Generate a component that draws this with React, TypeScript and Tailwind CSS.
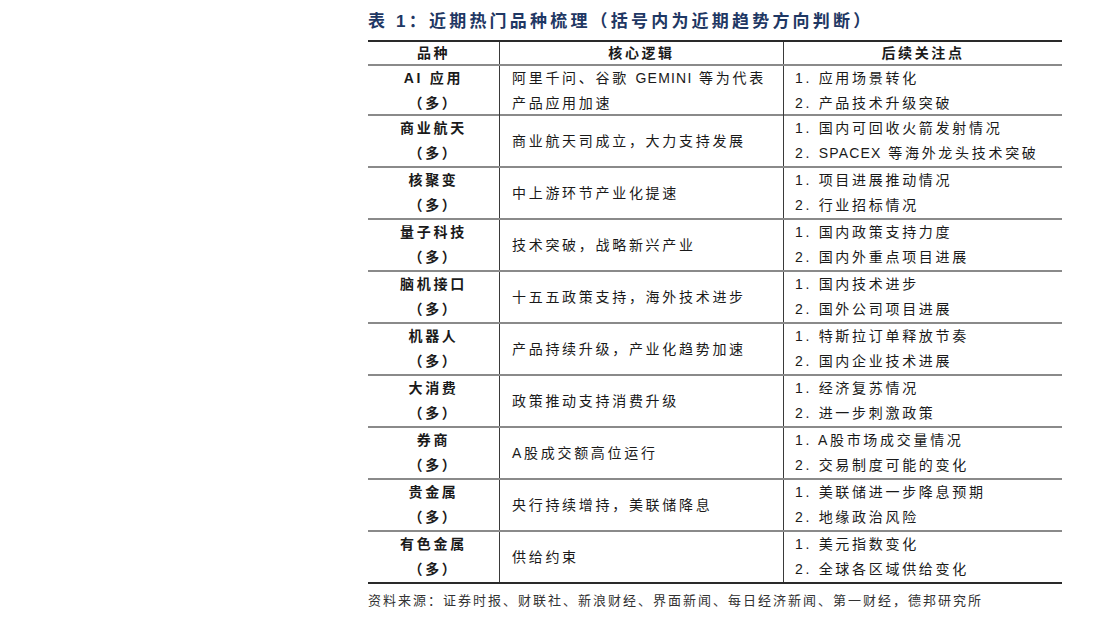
import React from "react";

type Row = { name: string; logic: string[]; focus: string[] };

const rows: Row[] = [
  { name: "AI 应用", logic: ["阿里千问、谷歌 GEMINI 等为代表", "产品应用加速"], focus: ["1. 应用场景转化", "2. 产品技术升级突破"] },
  { name: "商业航天", logic: ["商业航天司成立，大力支持发展"], focus: ["1. 国内可回收火箭发射情况", "2. SPACEX 等海外龙头技术突破"] },
  { name: "核聚变", logic: ["中上游环节产业化提速"], focus: ["1. 项目进展推动情况", "2. 行业招标情况"] },
  { name: "量子科技", logic: ["技术突破，战略新兴产业"], focus: ["1. 国内政策支持力度", "2. 国内外重点项目进展"] },
  { name: "脑机接口", logic: ["十五五政策支持，海外技术进步"], focus: ["1. 国内技术进步", "2. 国外公司项目进展"] },
  { name: "机器人", logic: ["产品持续升级，产业化趋势加速"], focus: ["1. 特斯拉订单释放节奏", "2. 国内企业技术进展"] },
  { name: "大消费", logic: ["政策推动支持消费升级"], focus: ["1. 经济复苏情况", "2. 进一步刺激政策"] },
  { name: "券商", logic: ["A股成交额高位运行"], focus: ["1. A股市场成交量情况", "2. 交易制度可能的变化"] },
  { name: "贵金属", logic: ["央行持续增持，美联储降息"], focus: ["1. 美联储进一步降息预期", "2. 地缘政治风险"] },
  { name: "有色金属", logic: ["供给约束"], focus: ["1. 美元指数变化", "2. 全球各区域供给变化"] },
];

function Txt({ t }: { t: string }) {
  const parts = t.split(/([A-Z]{3,})/);
  return (
    <>
      {parts.map((p, i) =>
        /^[A-Z]{3,}$/.test(p) ? (
          <span key={i} className="tracking-[1.2px]">{p}</span>
        ) : (
          <span key={i}>{p}</span>
        )
      )}
    </>
  );
}

export default function App() {
  return (
    <div className="w-[1110px] h-[624px] bg-white pl-[368px] pt-[10px] font-['Liberation_Sans','Noto_Sans_CJK_SC',sans-serif] text-[#1a1a1a]">
      <div className="h-[24px] leading-[24px] text-[17px] font-bold tracking-[3.2px] text-[#1f3864]">
        表 1：近期热门品种梳理（括号内为近期趋势方向判断）
      </div>
      <div className="mt-[6px] w-[694px] border-t-2 border-[#2a2a2a]">
        <div className="grid grid-cols-[132px_284px_1fr] h-[24px] border-b-2 border-[#8a8a8a] text-[14px] font-bold tracking-[2.6px]">
          <div className="border-r border-[#3a3a3a] flex items-center justify-center">品种</div>
          <div className="border-r border-[#3a3a3a] flex items-center justify-center">核心逻辑</div>
          <div className="flex items-center justify-center">后续关注点</div>
        </div>
        {rows.map((r, i) => (
          <div
            key={i}
            className={
              "grid grid-cols-[132px_284px_1fr] text-[14px] tracking-[2.7px] leading-[25px] " +
              (i === 0 ? "h-[50px] " : "h-[52px] ") +
              (i === rows.length - 1 ? "border-b-2 border-[#2a2a2a]" : "border-b-2 border-[#8a8a8a]")
            }
          >
            <div className="border-r border-[#3a3a3a] flex flex-col items-center justify-center font-bold">
              <div><Txt t={r.name} /></div>
              <div>（多）</div>
            </div>
            <div className="border-r border-[#3a3a3a] flex flex-col justify-center pl-[12px]">
              {r.logic.map((t, j) => (
                <div key={j} className="whitespace-nowrap"><Txt t={t} /></div>
              ))}
            </div>
            <div className="flex flex-col justify-center pl-[11px]">
              {r.focus.map((t, j) => (
                <div key={j} className="whitespace-nowrap"><Txt t={t} /></div>
              ))}
            </div>
          </div>
        ))}
      </div>
      <div className="mt-[8px] text-[13px] leading-[18px] tracking-[2px] text-[#333]">
        资料来源：证券时报、财联社、新浪财经、界面新闻、每日经济新闻、第一财经，德邦研究所
      </div>
    </div>
  );
}
